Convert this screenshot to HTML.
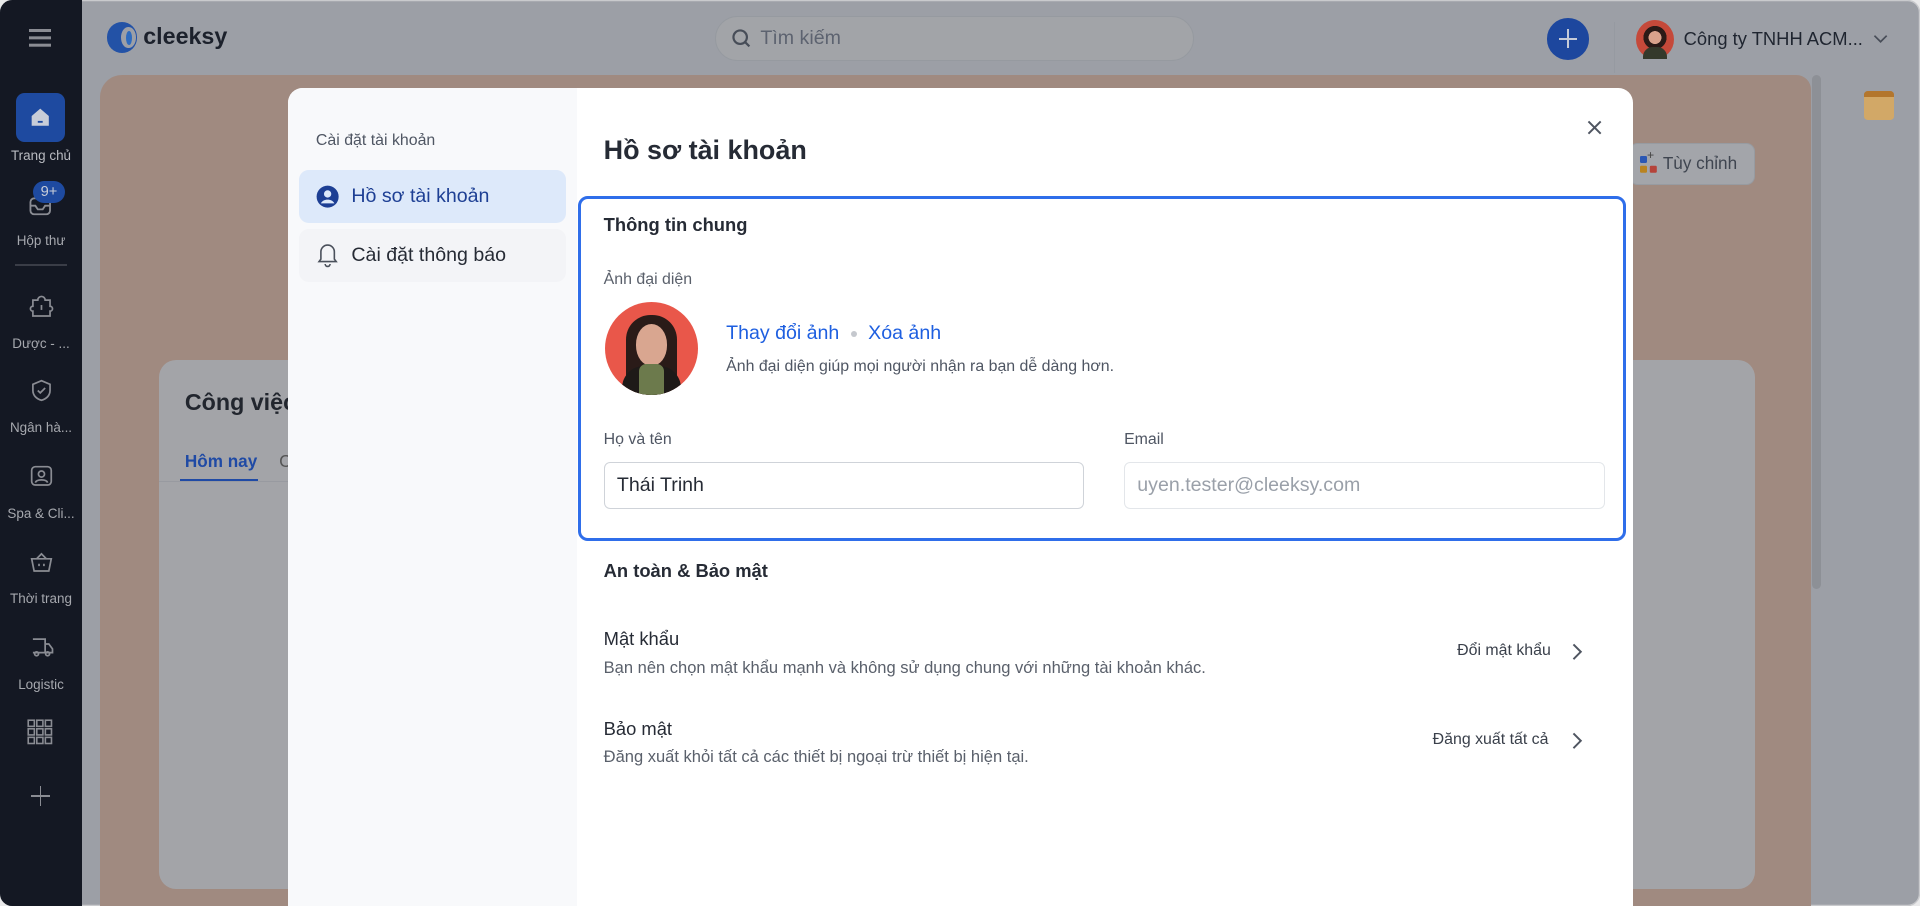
<!DOCTYPE html>
<html><head><meta charset="utf-8">
<style>
*{box-sizing:border-box;margin:0;padding:0}
html,body{width:1920px;height:906px;overflow:hidden;background:#e9e9ea}
body{font-family:"Liberation Sans","Noto Sans CJK SC",sans-serif}
#w{zoom:1.2244898;width:1568px;height:740px;position:relative;overflow:hidden}
.frame{position:absolute;left:0;top:0;width:1568px;height:740px;border-radius:10px;overflow:hidden;background:#9c9fa6;box-shadow:inset 0 0 0 1px #c9cacd}
.abs{position:absolute}
.side{left:0;top:0;width:67px;height:740px;background:#141823}
.sl{color:#a6a8ae;font-size:11px;text-align:center;width:67px;left:0}
.txt{color:#1f2937}
</style></head><body><div id="w"><div class="frame">
<!-- sidebar -->
<div class="abs side">
 <div class="abs" style="left:24px;top:24px;width:18px;height:2px;background:#8a8c93;box-shadow:0 6px 0 #8a8c93,0 12px 0 #8a8c93"></div>
 <div class="abs" style="left:13px;top:76px;width:40px;height:40px;border-radius:7px;background:#1e4aa0"></div>
 <svg class="abs" style="left:23px;top:86px" width="20" height="20" viewBox="0 0 20 20"><path d="M3 9 L10 3 L17 9 V17 H3Z" fill="#c8cdd8"/><rect x="8" y="13" width="4" height="1.5" fill="#1e4aa0"/></svg>
 <div class="abs sl" style="top:121px;color:#b8bac0">Trang chủ</div>
 <svg class="abs" style="left:23px;top:156px" width="22" height="22" viewBox="0 0 22 22" fill="none" stroke="#8a8c93" stroke-width="1.5"><rect x="2" y="6" width="16" height="13" rx="3"/><path d="M2 12h4l2 3h4l2-3h4"/></svg>
 <div class="abs" style="left:27px;top:148px;width:26px;height:18px;border-radius:9px;background:#1e4aa0;color:#c8cdd8;font-size:12px;text-align:center;line-height:18px">9+</div>
 <div class="abs sl" style="top:190px">Hộp thư</div>
 <div class="abs" style="left:12px;top:216px;width:43px;height:1px;background:#3a3d47"></div>
 <svg class="abs" style="left:23px;top:240px" width="22" height="22" viewBox="0 0 22 22" fill="none" stroke="#8a8c93" stroke-width="1.4"><path d="M8 5a3 3 0 0 1 6 0h4v5a2 2 0 0 1 0 4v4H4v-4a2 2 0 0 1 0-4V5z"/><path d="M11 9v4"/></svg>
 <div class="abs sl" style="top:274px">Dược - ...</div>
 <svg class="abs" style="left:23px;top:308px" width="22" height="22" viewBox="0 0 22 22" fill="none" stroke="#8a8c93" stroke-width="1.4"><path d="M11 3l7 3v5c0 4-3 7-7 8-4-1-7-4-7-8V6z"/><path d="M8 11l2 2 4-4"/></svg>
 <div class="abs sl" style="top:343px">Ngân hà...</div>
 <svg class="abs" style="left:23px;top:378px" width="22" height="22" viewBox="0 0 22 22" fill="none" stroke="#8a8c93" stroke-width="1.4"><rect x="3" y="3" width="16" height="15" rx="3"/><circle cx="11" cy="9" r="2.5"/><path d="M6 16c1-3 9-3 10 0"/></svg>
 <div class="abs sl" style="top:413px">Spa &amp; Cli...</div>
 <svg class="abs" style="left:23px;top:448px" width="22" height="22" viewBox="0 0 22 22" fill="none" stroke="#8a8c93" stroke-width="1.4"><path d="M3 8h16l-2 10H5z"/><path d="M7 8l4-4 4 4"/><path d="M9 12v2M13 12v2"/></svg>
 <div class="abs sl" style="top:483px">Thời trang</div>
 <svg class="abs" style="left:23px;top:517px" width="22" height="22" viewBox="0 0 22 22" fill="none" stroke="#8a8c93" stroke-width="1.4"><path d="M4 5h10v11H4M14 9h3l3 4v3h-6"/><circle cx="7" cy="17" r="1.6"/><circle cx="16" cy="17" r="1.6"/></svg>
 <div class="abs sl" style="top:553px">Logistic</div>
 <svg class="abs" style="left:22px;top:587px" width="22" height="22" viewBox="0 0 22 22" fill="none" stroke="#8a8c93" stroke-width="1.3"><g><rect x="1" y="1" width="5" height="5"/><rect x="8" y="1" width="5" height="5"/><rect x="15" y="1" width="5" height="5"/><rect x="1" y="8" width="5" height="5"/><rect x="8" y="8" width="5" height="5"/><rect x="15" y="8" width="5" height="5"/><rect x="1" y="15" width="5" height="5"/><rect x="8" y="15" width="5" height="5"/><rect x="15" y="15" width="5" height="5"/></g></svg>
 <div class="abs" style="left:25px;top:649px;width:16px;height:1.5px;background:#8a8c93"></div>
 <div class="abs" style="left:32.3px;top:642px;width:1.5px;height:16px;background:#8a8c93"></div>
</div>
<!-- top bar -->
<div class="abs" style="left:87px;top:18px;width:25px;height:25px;border-radius:50%;background:#2352a6"></div>
<div class="abs" style="left:99px;top:22px;width:12px;height:17px;border-radius:50%;background:#9c9fa6"></div>
<div class="abs" style="left:103px;top:25px;width:5px;height:12px;border-radius:50%;background:#2d6bc0"></div>
<div class="abs txt" style="left:117px;top:19px;font-size:19px;font-weight:bold;color:#1c212c">cleeksy</div>
<div class="abs" style="left:584px;top:13px;width:391px;height:37px;border-radius:19px;background:#a2a4a8;border:1px solid #969aa0"></div>
<svg class="abs" style="left:597px;top:23px" width="17" height="17" viewBox="0 0 17 17" fill="none" stroke="#474d58" stroke-width="1.8"><circle cx="7.5" cy="7.5" r="5.5"/><path d="M11.5 11.5l3.5 3.5"/></svg>
<div class="abs" style="left:621px;top:22px;font-size:16px;color:#5d6370">Tìm kiếm</div>
<div class="abs" style="left:1263px;top:15px;width:35px;height:34px;border-radius:50%;background:#1d479e"></div>
<div class="abs" style="left:1273px;top:31px;width:15px;height:1.5px;background:#c5cbd8"></div>
<div class="abs" style="left:1280px;top:24px;width:1.5px;height:15px;background:#c5cbd8"></div>
<div class="abs" style="left:1318px;top:18px;width:1px;height:42px;background:#969aa1"></div>
<div class="abs" style="left:1336px;top:16px;width:31px;height:32px;border-radius:50%;background:radial-gradient(circle at 50% 45%,#d9a28c 0 22%,#2a1a17 23% 40%,#c5493a 41%)"></div>
<div class="abs" style="left:1342px;top:38px;width:19px;height:10px;border-radius:8px 8px 0 0;background:#34392b"></div>
<div class="abs txt" style="left:1375px;top:23px;font-size:15px;color:#1f2530">Công ty TNHH ACM...</div>
<svg class="abs" style="left:1529px;top:26px" width="14" height="10" viewBox="0 0 14 10" fill="none" stroke="#484d58" stroke-width="1.4"><path d="M2 3l5 5 5-5"/></svg>
<!-- content -->
<div class="abs" style="left:82px;top:61px;width:1397px;height:690px;border-radius:18px 12px 0 0;background:#a08a80"></div>
<div class="abs" style="left:1480px;top:61px;width:7px;height:420px;border-radius:4px;background:#8d9096"></div>
<div class="abs" style="left:1522px;top:74px;width:25px;height:24px;border-radius:3px;background:#d2a867;border-top:5px solid #b3762d"></div>
<div class="abs" style="left:1330px;top:117px;width:103px;height:34px;border-radius:7px;background:#a3a5aa;border:1px solid #979ba1"></div>
<div class="abs" style="left:1339px;top:127px;width:6px;height:6px;background:#2b57b3;border-radius:1px;box-shadow:0 8px 0 #b98320,8px 8px 0 #b5433a"></div>
<div class="abs" style="left:1345px;top:121px;font-size:10px;color:#444">+</div>
<div class="abs" style="left:1358px;top:125px;font-size:14px;color:#3f4550">Tùy chỉnh</div>
<div class="abs" style="left:130px;top:294px;width:1303px;height:432px;border-radius:14px;background:#a3a4a8"></div>
<div class="abs" style="left:151px;top:318px;font-size:19px;font-weight:bold;color:#22262e">Công việc</div>
<div class="abs" style="left:151px;top:368px;font-size:14px;font-weight:bold;color:#1f4aa5">Hôm nay</div>
<div class="abs" style="left:147px;top:391px;width:64px;height:3px;background:#1f4aa5"></div>
<div class="abs" style="left:130px;top:393px;width:110px;height:1px;background:#989aa0"></div>
<div class="abs" style="left:228px;top:368px;font-size:14px;color:#555">C</div>
<!-- modal -->
<div class="abs" style="left:235px;top:72px;width:1099px;height:700px;border-radius:12px;background:#fff;overflow:hidden">
 <div class="abs" style="left:0;top:0;width:236px;height:700px;background:#f8f9fb"></div>
 <div class="abs" style="left:23px;top:36px;font-size:13px;color:#4f5663">Cài đặt tài khoản</div>
 <div class="abs" style="left:9px;top:67px;width:218px;height:43px;border-radius:8px;background:#dde9fa"></div>
 <svg class="abs" style="left:23px;top:79px" width="19" height="19" viewBox="0 0 19 19"><circle cx="9.5" cy="9.5" r="9" fill="#1d3f94"/><circle cx="9.5" cy="7.3" r="3" fill="#dde9fa"/><path d="M4 15c2-4 9-4 11 0" fill="#dde9fa"/></svg>
 <div class="abs" style="left:52px;top:79px;font-size:16px;color:#1d3f94">Hồ sơ tài khoản</div>
 <div class="abs" style="left:9px;top:115px;width:218px;height:43px;border-radius:8px;background:#f3f4f7"></div>
 <svg class="abs" style="left:23px;top:126px" width="19" height="21" viewBox="0 0 19 21" fill="none" stroke="#4a505b" stroke-width="1.3"><path d="M4 14V8a5.5 5.5 0 0 1 11 0v6l1.5 2h-14z"/><path d="M7.5 18a2 2 0 0 0 4 0"/></svg>
 <div class="abs" style="left:52px;top:127px;font-size:16px;color:#262b35">Cài đặt thông báo</div>
 <div class="abs" style="left:258px;top:38px;font-size:22px;font-weight:bold;color:#262b35">Hồ sơ tài khoản</div>
 <svg class="abs" style="left:1060px;top:25px" width="14" height="14" viewBox="0 0 14 14" stroke="#4f5561" stroke-width="1.6"><path d="M2 2l10 10M12 2L2 12"/></svg>
 <div class="abs" style="left:237px;top:88px;width:856px;height:282px;border:3px solid #2f6eea;border-radius:8px"></div>
 <div class="abs" style="left:258px;top:103px;font-size:15px;font-weight:bold;color:#262b35">Thông tin chung</div>
 <div class="abs" style="left:258px;top:149px;font-size:13px;color:#5a606b">Ảnh đại diện</div>
 <div class="abs" style="left:259px;top:175px;width:76px;height:76px;border-radius:50%;background:#e9574a;overflow:hidden">
  <div class="abs" style="left:17px;top:10px;width:42px;height:66px;border-radius:20px 20px 6px 6px;background:#2a1b18"></div>
  <div class="abs" style="left:25px;top:18px;width:26px;height:34px;border-radius:50%;background:#d9a690"></div>
  <div class="abs" style="left:14px;top:52px;width:48px;height:30px;border-radius:18px 18px 0 0;background:#1e1a18"></div>
  <div class="abs" style="left:28px;top:50px;width:20px;height:30px;border-radius:6px;background:#6c7a4c"></div>
 </div>
 <div class="abs" style="left:358px;top:191px;font-size:16px;color:#1e5fe0">Thay đổi ảnh</div>
 <div class="abs" style="left:460px;top:198px;width:5px;height:5px;border-radius:50%;background:#c5c8ce"></div>
 <div class="abs" style="left:474px;top:191px;font-size:16px;color:#1e5fe0">Xóa ảnh</div>
 <div class="abs" style="left:358px;top:220px;font-size:13px;color:#4f5663">Ảnh đại diện giúp mọi người nhận ra bạn dễ dàng hơn.</div>
 <div class="abs" style="left:258px;top:280px;font-size:13px;color:#4f5663">Họ và tên</div>
 <div class="abs" style="left:683px;top:280px;font-size:13px;color:#4f5663">Email</div>
 <div class="abs" style="left:258px;top:305px;width:392px;height:39px;border:1px solid #cfd3d9;border-radius:5px;padding:10px;font-size:16px;color:#262b35;line-height:17px">Thái Trinh</div>
 <div class="abs" style="left:683px;top:305px;width:393px;height:39px;border:1px solid #e3e6ea;border-radius:5px;padding:10px;font-size:16px;color:#9aa0a9;line-height:17px">uyen.tester@cleeksy.com</div>
 <div class="abs" style="left:258px;top:385px;font-size:15px;font-weight:bold;color:#262b35">An toàn &amp; Bảo mật</div>
 <div class="abs" style="left:258px;top:441px;font-size:15px;color:#262b35">Mật khẩu</div>
 <div class="abs" style="left:258px;top:465px;font-size:13.5px;color:#5a606b">Bạn nên chọn mật khẩu mạnh và không sử dụng chung với những tài khoản khác.</div>
 <div class="abs" style="left:955px;top:452px;font-size:13px;color:#3a404b">Đổi mật khẩu</div>
 <svg class="abs" style="left:1048px;top:452px" width="10" height="16" viewBox="0 0 10 16" fill="none" stroke="#4f5561" stroke-width="1.6"><path d="M2 2l6 6-6 6"/></svg>
 <div class="abs" style="left:258px;top:514px;font-size:15px;color:#262b35">Bảo mật</div>
 <div class="abs" style="left:258px;top:538px;font-size:13.5px;color:#5a606b">Đăng xuất khỏi tất cả các thiết bị ngoại trừ thiết bị hiện tại.</div>
 <div class="abs" style="left:935px;top:525px;font-size:13px;color:#3a404b">Đăng xuất tất cả</div>
 <svg class="abs" style="left:1048px;top:525px" width="10" height="16" viewBox="0 0 10 16" fill="none" stroke="#4f5561" stroke-width="1.6"><path d="M2 2l6 6-6 6"/></svg>
</div>
</div></div></body></html>
